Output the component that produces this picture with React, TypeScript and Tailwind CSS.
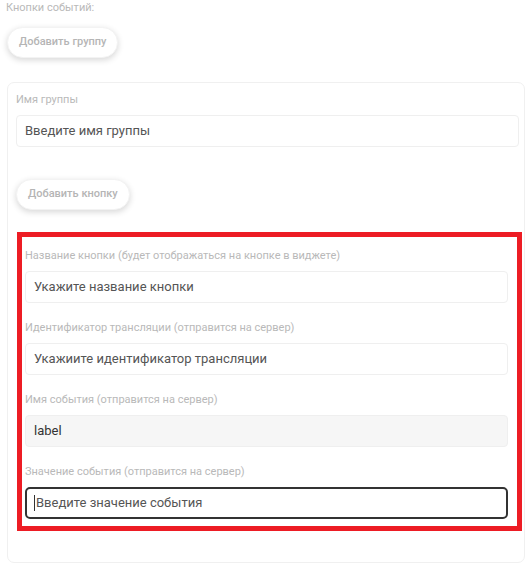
import React from "react";

const font = { fontFamily: "Roboto, 'Liberation Sans', Arial, sans-serif" };

function Label({ children }: { children: React.ReactNode }) {
  return <div className="text-[11px] leading-[14px] text-[#b9b9b9]">{children}</div>;
}

function Field({ value, filled }: { value: string; filled?: boolean }) {
  return (
    <div
      className={`h-[32px] rounded-[4px] border border-[#efefef] flex items-center pl-[8px] text-[13px] ${
        filled ? "bg-[#f6f6f6] text-[#333333]" : "bg-white text-[#555555]"
      }`}
    >
      {value}
    </div>
  );
}

function Pill({ children }: { children: React.ReactNode }) {
  return (
    <div className="inline-flex h-[31px] items-center rounded-full bg-white px-[11px] text-[11px] font-medium text-[#b5b5b5] shadow-[0_2px_6px_rgba(0,0,0,0.16)] border border-[#f3f3f3]">
      {children}
    </div>
  );
}

export default function App() {
  return (
    <div className="w-[529px] h-[569px] bg-white overflow-hidden" style={font}>
      <div className="pl-[6px] pt-[1px] text-[11px] leading-[14px] text-[#b9b9b9]">Кнопки событий:</div>
      <div className="pl-[7px] mt-[12px]">
        <Pill>Добавить группу</Pill>
      </div>
      <div className="ml-[7px] mr-[4px] mt-[24px] h-[481px] rounded-[7px] border border-[#f0f0f0] pt-[10px]">
        <div className="pl-[8px] pr-[5px]">
          <Label>Имя группы</Label>
          <div className="mt-[8px]">
            <Field value="Введите имя группы" />
          </div>
          <div className="mt-[32px]">
            <Pill>Добавить кнопку</Pill>
          </div>
        </div>
        <div className="mt-[22px] ml-[9px] mr-[2px] border-[5px] border-[#ed1c24] pl-[3px] pr-[9px] pt-[12px] pb-[7px]">
          <Label>Название кнопки (будет отображаться на кнопке в виджете)</Label>
          <div className="mt-[8px]">
            <Field value="Укажите название кнопки" />
          </div>
          <div className="mt-[18px]">
            <Label>Идентификатор трансляции (отправится на сервер)</Label>
          </div>
          <div className="mt-[8px]">
            <Field value="Укажиите идентификатор трансляции" />
          </div>
          <div className="mt-[18px]">
            <Label>Имя события (отправится на сервер)</Label>
          </div>
          <div className="mt-[8px]">
            <Field value="label" filled />
          </div>
          <div className="mt-[18px]">
            <Label>Значение события (отправится на сервер)</Label>
          </div>
          <div className="mt-[8px] h-[32px] rounded-[5px] border-2 border-[#333333] flex items-center pl-[7px] text-[13px] text-[#555555] bg-white">
            <span className="inline-block w-[1px] h-[16px] bg-[#333333] mr-[1px]" />
            Введите значение события
          </div>
        </div>
      </div>
    </div>
  );
}
